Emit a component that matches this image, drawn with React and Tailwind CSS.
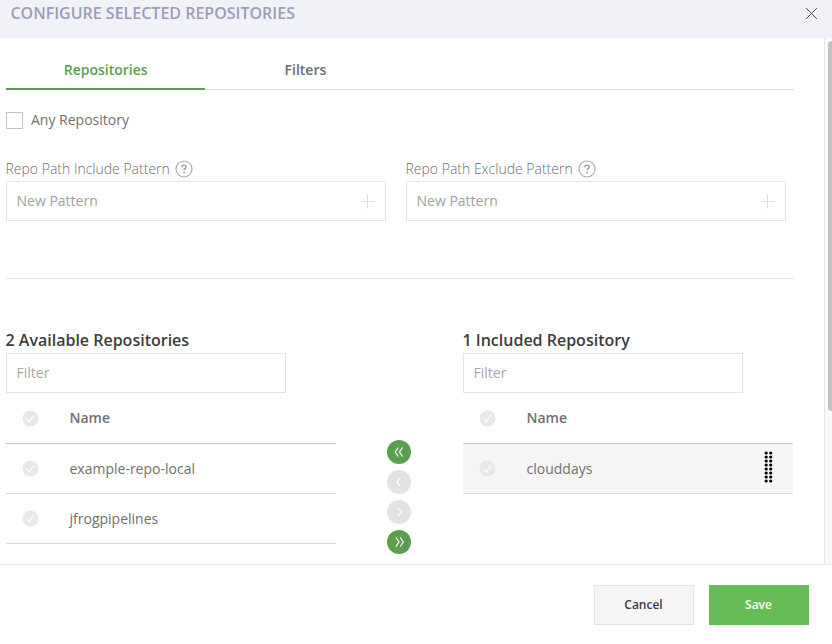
function HelpIcon() {
  return (
    <svg className="h-[18px] w-[18px] shrink-0" viewBox="0 0 18 18" fill="none">
      <circle cx="9" cy="9" r="8" stroke="#a9a9a9" strokeWidth="1.1" />
      <path d="M6.8 7.2C6.8 5.9 7.7 5.2 9 5.2s2.2.7 2.2 1.8c0 1.5-2.1 1.5-2.1 3.1" stroke="#a3a3a3" strokeWidth="1.6" />
      <circle cx="9.1" cy="12.4" r="1" fill="#a3a3a3" />
    </svg>
  );
}

function PatternField({ label }) {
  return (
    <div className="w-[380px]">
      <div className="-ml-[0.5px] flex h-[22px] items-center gap-[5.2px] pb-[2px]">
        <span className="text-sm font-light whitespace-nowrap text-[#6e6e6e]">{label}</span>
        <HelpIcon />
      </div>
      <div className="flex h-10 items-center justify-between border border-[#e5e5e5] bg-white pr-[10px] pl-[9.5px]">
        <span className="text-sm text-[#a0a0a0]">New Pattern</span>
        <svg className="h-[15px] w-[15px]" viewBox="0 0 15 15" fill="none" stroke="#dcdcdc">
          <path d="M7.5 .5v14M.5 7.7h14" />
        </svg>
      </div>
    </div>
  );
}

function CheckDot() {
  return (
    <svg className="ml-4 h-[17px] w-[17px] shrink-0" viewBox="0 0 17 17" fill="none">
      <circle cx="8.5" cy="8.5" r="8" fill="#e8e8e8" />
      <path d="M4.7 9l2.6 2.8 4.5-6.5" stroke="#fff" strokeWidth="1.1" />
    </svg>
  );
}

function DragHandle() {
  const rows = [0, 1, 2, 3, 4, 5, 6, 7];
  return (
    <svg className="mr-5 mb-1 ml-auto h-8 w-[9px]" viewBox="0 0 9 32" fill="#000">
      {rows.map((r) => (
        <g key={r}>
          <circle cx="2.2" cy={2 + r * 4} r="1.6" />
          <circle cx="6.7" cy={2 + r * 4} r="1.6" />
        </g>
      ))}
    </svg>
  );
}

function RepoList({ title, rows, selected }) {
  return (
    <div className="w-[330px]">
      <h2 className="-ml-[0.5px] flex h-[26px] items-center text-base font-semibold whitespace-nowrap text-[#3c3c3c]">{title}</h2>
      <div className="flex h-10 w-[280px] items-center border border-[#e5e5e5] px-[9.5px] text-sm text-[#a8a8a8]">Filter</div>
      <div className="flex h-[51px] items-center border-b border-[#c6c6c6] text-sm font-semibold text-[#707070]">
        <CheckDot />
        <span className="ml-[30.5px]">Name</span>
      </div>
      {rows.map((name) => (
        <div
          key={name}
          className={`flex h-[50px] items-center border-b border-[#dcdcdc] text-sm text-[#707070] ${selected ? "bg-[#f6f6f6]" : ""}`}
        >
          <CheckDot />
          <span className="ml-[30.5px]">{name}</span>
          {selected && <DragHandle />}
        </div>
      ))}
    </div>
  );
}

function MoveButton({ d, active }) {
  return (
    <button className={`flex h-6 w-6 items-center justify-center rounded-full ${active ? "bg-[#5a9f4d]" : "bg-[#e0e4e7]"}`}>
      <svg className="h-6 w-6" viewBox="0 0 24 24" fill="none" stroke="#fff" strokeWidth="1.2">
        <path d={d} />
      </svg>
    </button>
  );
}

export default function App() {
  return (
    <div className="flex h-[644px] w-[832px] flex-col overflow-hidden bg-white font-['Open_Sans',sans-serif]">
      <header className="flex h-[38px] shrink-0 items-start justify-between bg-[#f1f2f7] pr-[14px] pl-[10.4px]">
        <h1 className="mt-[1px] text-base font-semibold whitespace-nowrap text-[#9d9db8]">CONFIGURE SELECTED REPOSITORIES</h1>
        <svg className="mt-[7px] h-[13px] w-[13px]" viewBox="0 0 13 13" fill="none" stroke="#4a4a60" strokeWidth="1">
          <path d="M1 1l11 11M12 1L1 12" />
        </svg>
      </header>

      <div className="flex h-[526px] shrink-0">
        <main className="w-[824px] shrink-0 pl-[6px]">
          <nav className="flex h-[52px] w-[788px] border-b border-[#dcdcdc] text-sm font-semibold">
            <div className="flex h-[52px] w-[199.4px] items-center justify-center border-b-2 border-[#5a9f4d] pt-[14px] text-[#5a9f4d]">Repositories</div>
            <div className="flex h-[52px] w-[200px] items-center justify-center pt-3 text-[#6c6c6c]">Filters</div>
          </nav>
          <div className="mt-[20px] flex h-5 items-center gap-2">
            <span className="h-[17px] w-[17px] border border-[#c4c4c4] bg-white" />
            <span className="text-sm text-[#707070]">Any Repository</span>
          </div>
          <div className="mt-[29px] flex gap-5">
            <PatternField label="Repo Path Include Pattern" />
            <PatternField label="Repo Path Exclude Pattern" />
          </div>
          <div className="mt-[57px] h-px w-[788px] bg-[#e5e5e5]" />
          <div className="mt-12 flex">
            <RepoList title="2 Available Repositories" rows={["example-repo-local", "jfrogpipelines"]} />
            <div className="mt-[113px] mr-[52px] ml-[51px] flex flex-col gap-[6px]">
              <MoveButton active d="M11.3 7.5L8.2 12l3.1 4.5M15.6 7.5L12.5 12l3.1 4.5" />
              <MoveButton d="M13.3 8L10.1 12l3.2 4.2" />
              <MoveButton d="M11.3 8l3.2 4-3.2 4.2" />
              <MoveButton active d="M8.9 7.5L12 12l-3.1 4.5M13.2 7.5l3.1 4.5-3.1 4.5" />
            </div>
            <RepoList title="1 Included Repository" rows={["clouddays"]} selected />
          </div>
        </main>
        <div className="w-2 overflow-hidden border-l border-[#e5e5e5] bg-[#fafafa] pt-[3px] pl-[3px]">
          <div className="h-[370px] w-2 rounded-full bg-[#c1c1c1]" />
        </div>
      </div>

      <footer className="flex h-20 shrink-0 justify-end gap-[15px] border-t border-[#ebebeb] bg-white pt-5 pr-[23px]">
        <button className="h-10 w-[100px] border border-[#e6e6e6] bg-[#f6f6f6] pr-[1px] text-xs font-semibold text-[#3c3c3c]">Cancel</button>
        <button className="h-10 w-[100px] bg-[#67bc57] pr-[1px] text-xs font-semibold text-white">Save</button>
      </footer>
    </div>
  );
}
